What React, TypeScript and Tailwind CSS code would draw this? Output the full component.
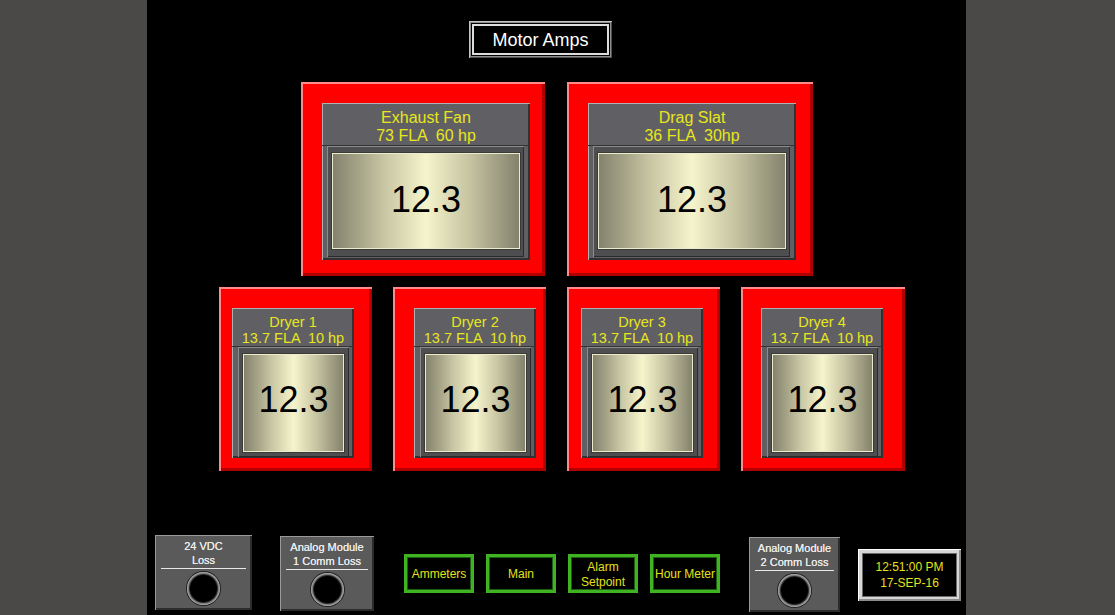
import React from "react";

const FONT = "font-['Liberation_Sans',Arial,sans-serif]";

function Readout({ pad, inner, value }: { pad: string; inner: string; value: string }) {
  return (
    <div
      className={`flex-1 bg-[#4e4e50] shadow-[inset_1px_1px_0_#8c8c8c,inset_-1px_-1px_0_#2a2a2a] ${pad} flex`}
    >
      <div
        className={`flex-1 flex items-center justify-center border border-[#ecebcd] bg-[linear-gradient(to_right,#84826c,#c9c7a4_28%,#f6f4cb_50%,#c9c7a4_72%,#84826c)] shadow-[0_0_0_1px_#3a3a36] ${inner}`}
      >
        <span className="text-[36px] leading-none text-black">{value}</span>
      </div>
    </div>
  );
}

function BigPanel({
  title,
  rating,
  outer,
}: {
  title: string;
  rating: string;
  outer: string;
}) {
  return (
    <div
      className={`${outer} h-[194px] bg-[#fe0000] pt-[21px] shadow-[inset_2px_2px_0_#ff8a8a,inset_-3px_-3px_0_#b00000]`}
    >
      <div className="w-[208px] h-[157px] bg-[#606064] flex flex-col shadow-[inset_1px_1px_0_#b0b0b0,inset_-2px_-2px_0_#323232]">
        <div className="h-[43px] pt-[6px] text-center text-[16px] leading-[18px] text-[#e8e61c] border-b border-[#333]">
          <div className="whitespace-pre">{title}</div>
          <div className="whitespace-pre">{rating}</div>
        </div>
        <div className="flex-1 flex pl-[5px] pr-[6px] pb-[3px]">
          <Readout pad="pt-[7px] pb-[8px] pl-[5px] pr-[4px]" inner="pb-[2px]" value="12.3" />
        </div>
      </div>
    </div>
  );
}

function SmallPanel({
  title,
  outer,
}: {
  title: string;
  outer: string;
}) {
  return (
    <div
      className={`${outer} h-[184px] bg-[#fe0000] pt-[21px] shadow-[inset_2px_2px_0_#ff8a8a,inset_-3px_-3px_0_#b00000]`}
    >
      <div className="w-[122px] h-[150px] bg-[#606064] flex flex-col shadow-[inset_1px_1px_0_#b0b0b0,inset_-2px_-2px_0_#323232]">
        <div className="h-[39px] pt-[6px] text-center text-[14.5px] leading-[16px] text-[#e8e61c] border-b border-[#333] whitespace-nowrap">
          <div>{title}</div>
          <div className="whitespace-pre">{"13.7 FLA  10 hp"}</div>
        </div>
        <div className="flex-1 flex pl-[6px] pr-[5px] pb-[1px]">
          <Readout pad="pt-[7px] pb-[5px] px-[5px]" inner="pb-[6px]" value="12.3" />
        </div>
      </div>
    </div>
  );
}

function Lamp({ lines, width, mt }: { lines: string[]; width: string; mt: string }) {
  return (
    <div
      className={`${width} ${mt} h-[75px] bg-[#5a5a5b] flex flex-col items-center pt-[4px] shadow-[inset_1px_1px_0_#9a9a9a,inset_-2px_-2px_0_#2c2c2c]`}
    >
      <div className="text-[11px] leading-[14px] text-[#ececec] text-center [text-shadow:0_0_0.4px_#ececec]">
        {lines.map((l) => (
          <div key={l}>{l}</div>
        ))}
      </div>
      <div className="self-stretch mx-[6px] mt-[1px] h-px bg-[#e8e8e8]" />
      <div className="mt-[2px] w-[35px] h-[35px] rounded-full bg-[#222] p-px">
        <div className="w-full h-full rounded-full bg-[#7a7a7a] p-[3px] shadow-[inset_0_0_0_1px_#a0a0a0]">
          <div className="w-full h-full rounded-full bg-black shadow-[0_0_0_1px_#2a2a2a]" />
        </div>
      </div>
    </div>
  );
}

function NavButton({ label }: { label: React.ReactNode }) {
  return (
    <div className="w-[70px] h-[39px] border-[3px] border-[#3fb322] bg-black flex items-center justify-center pt-[2px] text-center text-[12px] leading-[15px] text-[#e4e21a] shadow-[inset_0_0_0_1px_#1d5e12]">
      {label}
    </div>
  );
}

export default function App() {
  return (
    <div className={`w-[1115px] h-[615px] flex overflow-hidden ${FONT}`}>
      <div className="w-[147px] h-full bg-[#4b4848]" />
      <div className="w-[819px] h-full bg-black flex flex-col">
        {/* page title */}
        <div className="pt-[21px] pl-[322px]">
          <div className="w-[143px] h-[37px] bg-[#8e8e8e] p-[2px] shadow-[inset_1px_1px_0_#c4c4c4,inset_-1px_-1px_0_#505050]">
            <div className="w-full h-full bg-black p-px">
              <div className="w-full h-full border-2 border-[#dcdcdc] bg-black flex items-center justify-center">
                <span className="text-[18px] leading-none text-white">Motor Amps</span>
              </div>
            </div>
          </div>
        </div>

        {/* main motors */}
        <div className="mt-[24px] pl-[154px] flex gap-[22px]">
          <BigPanel title="Exhaust Fan" rating={"73 FLA  60 hp"} outer="w-[244px] pl-[21px]" />
          <BigPanel title="Drag Slat" rating={"36 FLA  30hp"} outer="w-[246px] pl-[21px]" />
        </div>

        {/* dryers */}
        <div className="mt-[11px] pl-[72px] flex">
          <SmallPanel title="Dryer 1" outer="w-[153px] pl-[13px]" />
          <SmallPanel title="Dryer 2" outer="ml-[21px] w-[153px] pl-[21px]" />
          <SmallPanel title="Dryer 3" outer="ml-[21px] w-[153px] pl-[14px]" />
          <SmallPanel title="Dryer 4" outer="ml-[21px] w-[164px] pl-[20px]" />
        </div>

        {/* status + navigation */}
        <div className="mt-[64px] flex items-start">
          <div className="ml-[8px]">
            <Lamp lines={["24 VDC", "Loss"]} width="w-[97px]" mt="mt-0" />
          </div>
          <div className="ml-[28px]">
            <Lamp lines={["Analog Module", "1 Comm Loss"]} width="w-[94px]" mt="mt-[1px]" />
          </div>
          <div className="ml-[30px] mt-[19px] flex gap-[12px]">
            <NavButton label="Ammeters" />
            <NavButton label="Main" />
            <NavButton
              label={
                <span>
                  Alarm
                  <br />
                  Setpoint
                </span>
              }
            />
            <NavButton label="Hour Meter" />
          </div>
          <div className="ml-[29px]">
            <Lamp lines={["Analog Module", "2 Comm Loss"]} width="w-[91px]" mt="mt-[2px]" />
          </div>
          <div className="ml-[18px] mt-[14px] w-[103px] h-[52px] bg-[#d6d6d6] p-[4px] shadow-[inset_1px_1px_0_#ffffff,inset_-2px_-2px_0_#8a8a8a]">
            <div className="w-full h-full bg-black border border-[#6a6a6a] flex flex-col items-center justify-center text-[12px] leading-[16px] text-[#e4e21a]">
              <div>12:51:00 PM</div>
              <div>17-SEP-16</div>
            </div>
          </div>
        </div>
      </div>
      <div className="flex-1 h-full bg-[#4b4848]" />
    </div>
  );
}
